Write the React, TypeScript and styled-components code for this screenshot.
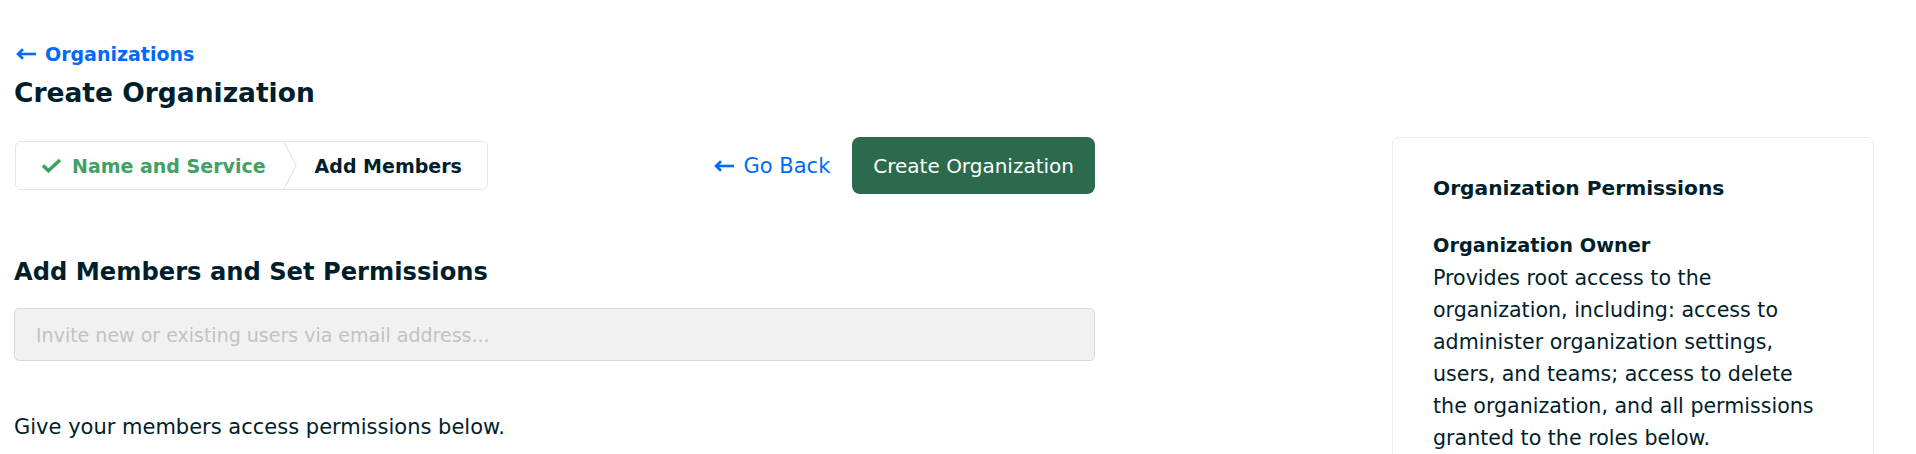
import React from "react";
import styled, { createGlobalStyle } from "styled-components";

const GlobalStyle = createGlobalStyle`
  html, body {
    margin: 0;
    padding: 0;
    background: #fff;
  }
  body {
    font-family: "DejaVu Sans", "Noto Sans", sans-serif;
    color: #001e2b;
  }
`;

const ArrowLeft = ({ size = 21 }: { size?: number }) => (
  <svg width={size} height={12} viewBox="0 0 21 12" fill="none">
    <path d="M20 6H2.5" stroke="currentColor" strokeWidth="2.6" />
    <path d="M7 1.2L2 6l5 4.8" stroke="currentColor" strokeWidth="2.6" />
  </svg>
);

const Check = () => (
  <svg width="21" height="15" viewBox="0 0 21 15" fill="none">
    <path d="M2 7.5l5.4 5.2L19 2" stroke="currentColor" strokeWidth="3.6" />
  </svg>
);

const ownerLines = [
  "Provides root access to the",
  "organization, including: access to",
  "administer organization settings,",
  "users, and teams; access to delete",
  "the organization, and all permissions",
  "granted to the roles below.",
];

const App = () => {
  return (
    <>
      <GlobalStyle />
      <Page>
        <Header>
          <BackLink href="#">
            <ArrowLeft />
            Organizations
          </BackLink>
          <PageTitle>Create Organization</PageTitle>
        </Header>
        <Body>
          <Main>
            <StepRow>
              <Stepper>
                <Step done>
                  <Check />
                  Name and Service
                </Step>
                <Chevron viewBox="0 0 16 50" preserveAspectRatio="none">
                  <path d="M1 0L14 25L1 50" stroke="#e3e3e3" strokeWidth="1.2" fill="none" />
                </Chevron>
                <Step>Add Members</Step>
              </Stepper>
              <Actions>
                <GoBack href="#">
                  <ArrowLeft />
                  Go Back
                </GoBack>
                <PrimaryButton>Create Organization</PrimaryButton>
              </Actions>
            </StepRow>
            <SectionTitle>Add Members and Set Permissions</SectionTitle>
            <EmailInput placeholder="Invite new or existing users via email address..." />
            <Hint>Give your members access permissions below.</Hint>
          </Main>
          <Aside>
            <AsideTitle>Organization Permissions</AsideTitle>
            <Role>
              <RoleName>Organization Owner</RoleName>
              <RoleText>
                {ownerLines.map((line, i) => (
                  <React.Fragment key={i}>
                    {line}
                    {i < ownerLines.length - 1 && <br />}
                  </React.Fragment>
                ))}
              </RoleText>
            </Role>
          </Aside>
        </Body>
      </Page>
    </>
  );
};

export default App;

const Page = styled.div`
  padding: 40px 42px 0 14px;
  height: 454px;
  box-sizing: border-box;
  overflow: hidden;
`;

const Header = styled.div`
  display: flex;
  flex-direction: column;
`;

const BackLink = styled.a`
  display: flex;
  align-items: center;
  gap: 8px;
  color: #016bf8;
  font-size: 19px;
  font-weight: 700;
  line-height: 26px;
  text-decoration: none;
  padding-left: 2px;
  margin-top: 1px;
`;

const PageTitle = styled.h1`
  margin: 6px 0 0;
  font-size: 26.5px;
  line-height: 40px;
  font-weight: 700;
`;

const Body = styled.div`
  display: flex;
  justify-content: space-between;
  align-items: flex-start;
  margin-top: 24px;
`;

const Main = styled.div`
  width: 1081px;
  display: flex;
  flex-direction: column;
`;

const StepRow = styled.div`
  display: flex;
  align-items: center;
  justify-content: space-between;
  height: 57px;
`;

const Stepper = styled.div`
  display: flex;
  align-items: stretch;
  height: 49px;
  margin-left: 1px;
  border: 1px solid #e6e6e6;
  border-radius: 6px;
  box-sizing: border-box;
  padding: 0 25px 0 25px;
`;

const Step = styled.div<{ done?: boolean }>`
  display: flex;
  align-items: center;
  gap: 10px;
  font-size: 19px;
  font-weight: 700;
  color: ${({ done }) => (done ? "#41a063" : "#001e2b")};
`;

const Chevron = styled.svg`
  width: 15px;
  height: 100%;
  margin: 0 17px;
`;

const Actions = styled.div`
  display: flex;
  align-items: center;
  gap: 22px;
`;

const GoBack = styled.a`
  display: flex;
  align-items: center;
  gap: 9px;
  color: #016bf8;
  font-size: 21px;
  text-decoration: none;
`;

const PrimaryButton = styled.button`
  height: 57px;
  padding: 0 21px;
  border: none;
  border-radius: 8px;
  background: #2c6a4d;
  color: #fff;
  font-family: inherit;
  font-size: 20px;
  cursor: pointer;
`;

const SectionTitle = styled.h2`
  margin: 62px 0 0;
  font-size: 24.2px;
  line-height: 32px;
  font-weight: 700;
`;

const EmailInput = styled.input`
  margin-top: 20px;
  height: 53px;
  box-sizing: border-box;
  border: 1px solid #d9d9d9;
  border-radius: 5px;
  background: #f1f1f1;
  padding: 0 21px;
  font-family: inherit;
  font-size: 19px;
  outline: none;
  &::placeholder {
    color: #c2c2c2;
  }
`;

const Hint = styled.p`
  margin: 52px 0 0;
  font-size: 21px;
  line-height: 28px;
`;

const Aside = styled.aside`
  width: 482px;
  box-sizing: border-box;
  border: 1px solid #ebebeb;
  border-radius: 6px;
  padding: 34px 40px 40px;
  min-height: 360px;
`;

const AsideTitle = styled.h3`
  margin: 0;
  font-size: 20.2px;
  line-height: 32px;
  font-weight: 700;
`;

const Role = styled.div`
  margin-top: 26px;
`;

const RoleName = styled.div`
  font-size: 19.3px;
  line-height: 32px;
  font-weight: 700;
`;

const RoleText = styled.div`
  font-size: 20.6px;
  line-height: 32px;
  white-space: nowrap;
`;
